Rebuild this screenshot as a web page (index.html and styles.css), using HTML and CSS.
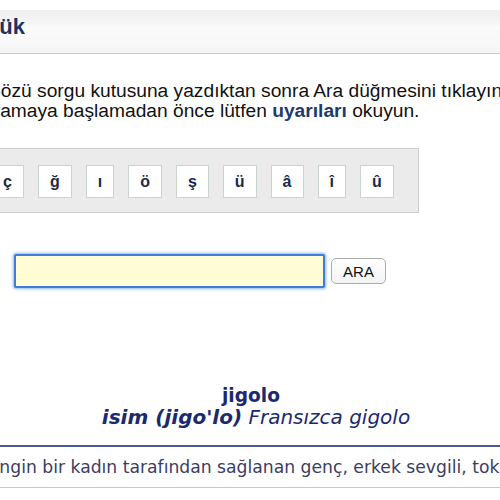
FILE: index.html
```html
<!DOCTYPE html>
<html lang="tr">

<head>
    <meta charset="utf-8" />
    <title>Sözlük</title>
    <link rel="stylesheet" href="styles.css">
</head>

<body>
    <div class="page">
        <!-- başlık -->
        <div class="header">
            <h1>Sözlük</h1>
        </div>

        <p class="intro">Sözü sorgu kutusuna yazdıktan sonra Ara düğmesini tıklayın.<br>Aramaya başlamadan önce lütfen <a href="#">uyarıları</a> okuyun.</p>

        <!-- Türkçe karakterler -->
        <div class="letters">
            <button class="chr">ç</button>
            <button class="chr">ğ</button>
            <button class="chr">ı</button>
            <button class="chr">ö</button>
            <button class="chr">ş</button>
            <button class="chr">ü</button>
            <button class="chr">â</button>
            <button class="chr">î</button>
            <button class="chr">û</button>
        </div>

        <!-- sorgu kutusu -->
        <form class="search">
            <input type="text" class="query" id="query">
            <button type="button" class="go">ARA</button>
        </form>

        <!-- sonuç -->
        <div class="entry">
            <div class="word">jigolo</div>
            <div class="meta"><b>isim (jigo'lo)</b> Fransızca gigolo</div>
        </div>
        <div class="meaning">Zengin bir kadın tarafından sağlanan genç, erkek sevgili, tokmak</div>
    </div>
</body>
</html>
```

FILE: styles.css
```css
html,
body {
    margin: 0;
    overflow: hidden;
    background: #fff;
}

.page {
    margin-left: -60px;
    width: 640px;
    padding-top: 10px;
    font-family: "Liberation Sans", Arial, sans-serif;
    color: #111;
}

.header {
    height: 43px;
    border-bottom: 1px solid #cdcdcd;
    background: linear-gradient(#eeeeee, #fafafa 45%, #f5f5f5);
}

.header h1 {
    margin: 0;
    padding: 4px 0 0 14px;
    font-size: 22px;
    line-height: 26px;
    color: #1e3260;
}

.intro {
    margin: 27px 0 0 41px;
    font-size: 19.2px;
    line-height: 20px;
    text-indent: 7px;
    white-space: nowrap;
}

.intro a {
    color: #1d3a6e;
    font-weight: bold;
    text-decoration: none;
}

.letters {
    display: flex;
    gap: 14px;
    width: fit-content;
    margin: 27px 0 0 34px;
    padding: 16px 24px 14px 16px;
    background: #ebebeb;
    border: 1px solid #c9d0cd;
}

.chr {
    height: 33px;
    padding: 0 11px;
    font-family: "Liberation Sans", Arial, sans-serif;
    font-size: 16px;
    font-weight: bold;
    color: #1a2a4a;
    background: #fff;
    border: 1px solid #c9d3cf;
    border-radius: 0;
}

.search {
    display: flex;
    align-items: center;
    gap: 6px;
    margin: 41px 0 0 74px;
}

.query {
    box-sizing: border-box;
    width: 311px;
    height: 34px;
    background: #fffcd6;
    border: 2px solid #3f7ddc;
    border-radius: 2px;
    box-shadow: 0 0 3px 1px #8db6f0;
    outline: none;
}

.go {
    height: 26px;
    width: 55px;
    padding: 0;
    font-family: "Liberation Sans", Arial, sans-serif;
    font-size: 15px;
    color: #111;
    background: linear-gradient(#fff, #f4f4f4);
    border: 1px solid #aaa;
    border-radius: 5px;
}

.entry {
    margin-top: 97px;
    padding-right: 8px;
    text-align: center;
    font-family: "DejaVu Sans", Verdana, sans-serif;
    color: #1b2a6e;
}

.word {
    padding-right: 10px;
    font-size: 18.6px;
    line-height: 22px;
    font-weight: bold;
}

.meta {
    font-size: 20px;
    line-height: 21px;
    font-style: italic;
}

.meaning {
    margin-top: 17px;
    padding: 10px 0 9px 37px;
    border-top: 2px solid #4d5a8c;
    border-bottom: 1px solid #c8c8c8;
    font-family: "DejaVu Sans", Verdana, sans-serif;
    font-size: 17.2px;
    line-height: 21px;
    color: #3b3c64;
    white-space: nowrap;
}
```
